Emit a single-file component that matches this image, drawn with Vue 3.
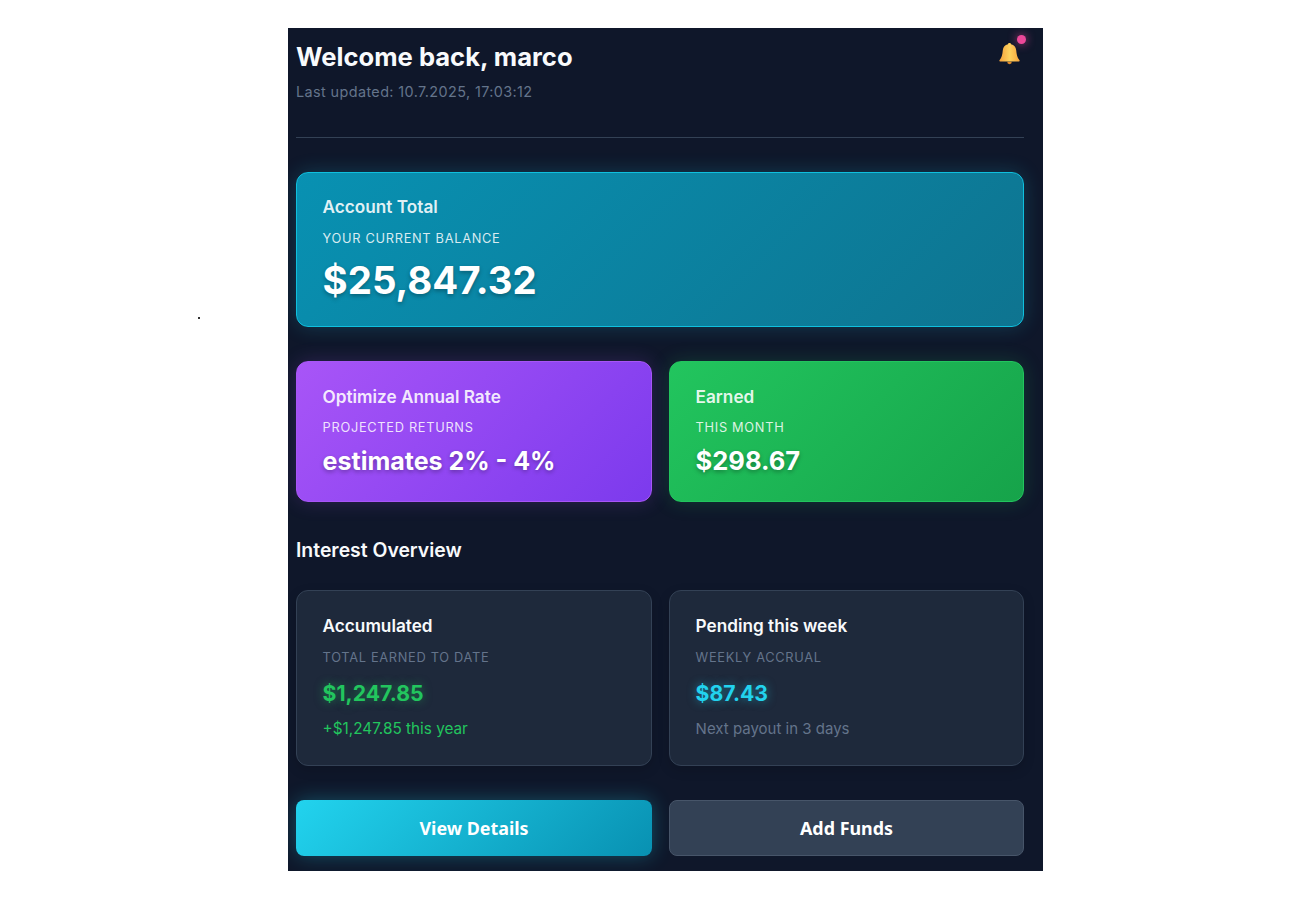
<script setup>
const tiles = [
  { title: 'Accumulated', label: 'TOTAL EARNED TO DATE', amount: '$1,247.85', note: '+$1,247.85 this year', tone: 'green' },
  { title: 'Pending this week', label: 'WEEKLY ACCRUAL', amount: '$87.43', note: 'Next payout in 3 days', tone: 'cyan' }
]
</script>

<template>
  <div class="page">
    <span class="speck"></span>
    <main class="panel">
      <header class="head">
        <div>
          <h1>Welcome back, marco</h1>
          <p class="updated">Last updated: 10.7.2025, 17:03:12</p>
        </div>
        <div class="bell">
          <svg width="21" height="22" viewBox="0 0 20 21">
            <defs>
              <linearGradient id="bellFill" x1="0" y1="0" x2="1" y2="0">
                <stop offset="0" stop-color="#f4a03a" />
                <stop offset="0.5" stop-color="#fdd25e" />
                <stop offset="1" stop-color="#f6a53c" />
              </linearGradient>
            </defs>
            <path fill="#e08a2c" d="M7.800 18h4.400a2.200 2.200 0 0 1-4.400 0z" />
            <path fill="url(#bellFill)" d="M10 0c.8 0 1.400.5 1.500 1.300 2.800.6 4.600 2.800 4.900 5.600.4 4 .9 6.800 3 9.300.6.6.4 1.500-.5 1.500H1.100c-.9 0-1.100-.9-.5-1.500 2.100-2.500 2.600-5.300 3-9.300.3-2.800 2.100-5 4.900-5.600C8.600.5 9.200 0 10 0z" />
          </svg>
          <span class="dot"></span>
        </div>
      </header>

      <section class="card balance">
        <h2>Account Total</h2>
        <p class="label">YOUR CURRENT BALANCE</p>
        <p class="big">$25,847.32</p>
      </section>

      <div class="row">
        <section class="card purple">
          <h2>Optimize Annual Rate</h2>
          <p class="label">PROJECTED RETURNS</p>
          <p class="mid">estimates 2% - 4%</p>
        </section>
        <section class="card green">
          <h2>Earned</h2>
          <p class="label">THIS MONTH</p>
          <p class="mid">$298.67</p>
        </section>
      </div>

      <h3 class="section-title">Interest Overview</h3>

      <div class="row">
        <section v-for="t in tiles" :key="t.title" class="card tile">
          <h2>{{ t.title }}</h2>
          <p class="label">{{ t.label }}</p>
          <p class="amount" :class="t.tone === 'green' ? 'up' : 'cyan'">{{ t.amount }}</p>
          <p class="note" :class="{ pos: t.tone === 'green' }">{{ t.note }}</p>
        </section>
      </div>

      <div class="row actions">
        <button class="btn primary">View Details</button>
        <button class="btn secondary">Add Funds</button>
      </div>
    </main>
  </div>
</template>

<style>
html, body {
  background: #fff;
}
</style>

<style scoped>
.page {
  position: relative;
  height: 919px;
  padding: 28px 0 0 288px;
  box-sizing: border-box;
  font-family: Inter, "Liberation Sans", sans-serif;
}

.speck {
  position: absolute;
  left: 198px;
  top: 317px;
  width: 2px;
  height: 2px;
  background: #333;
}

.panel {
  width: 755px;
  height: 843px;
  box-sizing: border-box;
  padding: 0 19px 0 8px;
  background: #0f172a;
  color: #f8fafc;
  overflow: hidden;
}

.head {
  display: flex;
  justify-content: space-between;
  align-items: flex-start;
  height: 110px;
  border-bottom: 1px solid #334155;
  box-sizing: border-box;
  padding-top: 14px;
}

h1 {
  margin: 0;
  font-size: 25.6px;
  line-height: 30px;
  font-weight: 700;
  color: #f8fafc;
}

.updated {
  margin: 10px 0 0;
  font-size: 14.4px;
  line-height: 20px;
  letter-spacing: 0.4px;
  color: #64748b;
}

.bell {
  position: relative;
  width: 21px;
  height: 22px;
  margin: 1px 4px 0 0;
}

.bell svg {
  display: block;
}

.dot {
  position: absolute;
  top: -8px;
  right: -6px;
  width: 9px;
  height: 9px;
  border-radius: 50%;
  background: #ec4899;
  box-shadow: 0 0 10px rgba(236, 72, 153, 0.8);
}

.card {
  box-sizing: border-box;
  border-radius: 12px;
  padding: 25px 25.6px;
}

.card h2 {
  margin: 0;
  font-size: 17.2px;
  line-height: 20px;
  font-weight: 600;
  color: rgba(255, 255, 255, 0.9);
}

.label {
  margin: 13px 0 0;
  font-size: 12.8px;
  line-height: 16px;
  letter-spacing: 0.7px;
  color: rgba(255, 255, 255, 0.85);
}

.balance {
  height: 155px;
  margin-top: 34px;
  padding-top: 24px;
  border: 1px solid #0fc0de;
  background: linear-gradient(135deg, #0891b2, #0e7490);
  box-shadow: 0 0 20px rgba(34, 211, 238, 0.2);
}

.balance .label {
  margin-top: 14px;
}

.big {
  margin: 9px 0 0;
  font-size: 38.4px;
  line-height: 48px;
  font-weight: 700;
  color: #fff;
  text-shadow: 0 2px 4px rgba(0, 0, 0, 0.3);
}

.row {
  display: grid;
  grid-template-columns: 356px 355px;
  gap: 17px;
  margin-top: 34px;
}

.purple,
.green {
  height: 141px;
}

.purple {
  background: linear-gradient(135deg, #a855f7, #7c3aed);
  border: 1px solid #a855f7;
  box-shadow: 0 0 20px rgba(168, 85, 247, 0.2);
}

.green {
  background: linear-gradient(135deg, #22c55e, #16a34a);
  border: 1px solid #22c55e;
  box-shadow: 0 0 20px rgba(34, 197, 94, 0.2);
}

.mid {
  margin: 9px 0 0;
  font-size: 25px;
  line-height: 32px;
  font-weight: 700;
  color: #fff;
  text-shadow: 0 2px 4px rgba(0, 0, 0, 0.3);
}

.green .mid {
  font-size: 25.5px;
}

.section-title {
  margin: 36px 0 0;
  font-size: 19.4px;
  line-height: 24px;
  font-weight: 600;
  color: #f8fafc;
}

.section-title + .row {
  margin-top: 28px;
}

.tile {
  height: 176px;
  background: #1e293b;
  border: 1px solid #334155;
  box-shadow: 0 4px 12px rgba(0, 0, 0, 0.15);
}

.tile h2 {
  color: #f8fafc;
}

.tile .label {
  margin-top: 14px;
  color: #64748b;
}

.amount {
  margin: 13px 0 0;
  font-size: 21.2px;
  line-height: 28px;
  font-weight: 700;
}

.amount.up {
  color: #22c55e;
  text-shadow: 0 0 10px rgba(34, 197, 94, 0.5);
}

.amount.cyan {
  color: #22d3ee;
  text-shadow: 0 0 10px rgba(34, 211, 238, 0.5);
}

.note {
  margin: 12px 0 0;
  font-size: 15px;
  line-height: 20px;
  color: #64748b;
}

.note.pos {
  font-size: 15.3px;
  color: #22c55e;
}

.btn {
  height: 56px;
  border-radius: 8px;
  font-family: "Noto Sans", sans-serif;
  font-size: 17.9px;
  font-weight: 700;
  color: #fff;
  cursor: pointer;
}

.primary {
  border: 0;
  background: linear-gradient(135deg, #22d3ee, #0891b2);
  box-shadow: 0 0 20px rgba(34, 211, 238, 0.3);
}

.secondary {
  background: #334155;
  border: 1px solid #475569;
}
</style>
